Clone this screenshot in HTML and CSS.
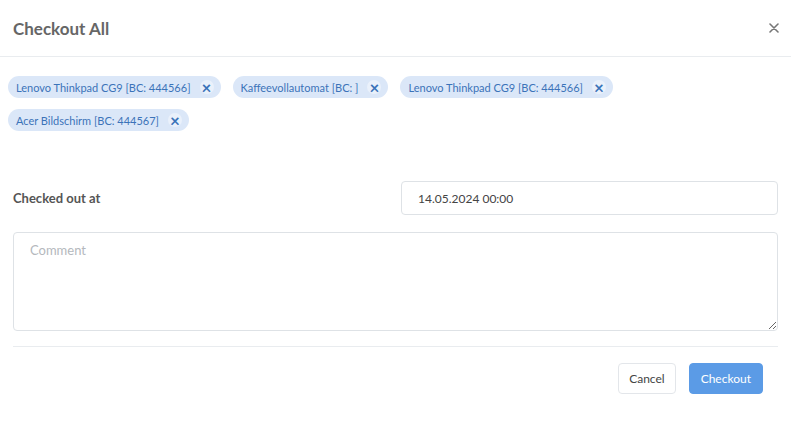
FILE: index.html
```html
<!DOCTYPE html>
<html>
<head>
  <title>Checkout All</title>
  <link rel="stylesheet" href="styles.css">
</head>
<body>
  <div class="modal">
    <div class="modal-header">
      <h2 class="modal-title">Checkout All</h2>
      <button class="close" aria-label="Close">
        <svg width="10" height="10" viewBox="0 0 10 10"><path d="M1 1L9 9M9 1L1 9" stroke="#777" stroke-width="1.6" stroke-linecap="round"/></svg>
      </button>
    </div>
    <div class="modal-body">
      <div class="tags">
        <span class="tag">Lenovo Thinkpad CG9 [BC: 444566]<span class="tag-remove">&times;</span></span>
        <span class="tag">Kaffeevollautomat [BC: ]<span class="tag-remove">&times;</span></span>
        <span class="tag">Lenovo Thinkpad CG9 [BC: 444566]<span class="tag-remove">&times;</span></span>
        <span class="tag">Acer Bildschirm [BC: 444567]<span class="tag-remove">&times;</span></span>
      </div>

      <div class="form-row">
        <label class="form-label">Checked out at</label>
        <input class="form-control" type="text" value="14.05.2024 00:00">
      </div>

      <textarea class="form-control comment" placeholder="Comment"></textarea>
    </div>
    <div class="modal-footer">
      <button class="btn btn-light">Cancel</button>
      <button class="btn btn-primary">Checkout</button>
    </div>
  </div>
</body>
</html>
```

FILE: styles.css
```css
body {
  margin: 0;
  font-family: Lato, "Liberation Sans", sans-serif;
  background-color: #fff;
  color: #555;
}

.modal {
  width: 791px;
}

.modal-header {
  display: flex;
  align-items: center;
  justify-content: space-between;
  height: 57px;
  padding: 0 13px;
  border-bottom: 1px solid #e9ecef;
  box-sizing: border-box;
}

.modal-title {
  margin: 0;
  font-size: 17px;
  font-weight: 700;
  color: #666;
}

.close {
  background: none;
  border: none;
  padding: 0;
  margin-right: -1px;
  cursor: pointer;
  display: flex;
}

.modal-body {
  padding: 19px 13px 0;
}

.tags {
  display: flex;
  flex-wrap: wrap;
  gap: 11px 12px;
  margin-left: -5px;
}

.tag {
  display: inline-flex;
  align-items: center;
  height: 22px;
  padding: 0 7px 0 8px;
  border-radius: 11px;
  background-color: #dbe7f8;
  color: #3b73b9;
  font-size: 11px;
}

.tag-remove {
  display: inline-flex;
  align-items: center;
  justify-content: center;
  width: 14px;
  height: 14px;
  margin-left: 9px;
  border-radius: 50%;
  background-color: #eaf1fb;
  color: #3b73b9;
  font-size: 17px;
  font-weight: 700;
  line-height: 1;
}

.form-row {
  display: grid;
  grid-template-columns: 1fr 1fr;
  column-gap: 11px;
  align-items: center;
  margin-top: 50px;
}

.form-label {
  font-size: 13px;
  font-weight: 700;
  color: #555;
}

.form-control {
  font-family: inherit;
  font-size: 12px;
  color: #444;
  border: 1px solid #dee2e6;
  border-radius: 4px;
  box-sizing: border-box;
  background: #fff;
}

input.form-control {
  height: 34px;
  padding: 0 16px;
}

.comment {
  display: block;
  width: 100%;
  height: 99px;
  margin-top: 17px;
  padding: 9px 16px;
  font-size: 13px;
  resize: vertical;
}

.comment::placeholder {
  color: #b4b8bd;
}

.modal-footer {
  display: flex;
  justify-content: flex-end;
  gap: 13px;
  margin: 15px 13px 0;
  padding: 16px 15px 0 0;
  border-top: 1px solid #e9ecef;
}

.btn {
  height: 31px;
  padding: 0 10px;
  font-family: inherit;
  font-size: 12px;
  border-radius: 4px;
  cursor: pointer;
}

.btn-light {
  background: #fff;
  border: 1px solid #e3e6ea;
  color: #444;
}

.btn-primary {
  padding: 0 11px;
  background-color: #5b9be6;
  border: 1px solid #5b9be6;
  color: #fff;
}
```
